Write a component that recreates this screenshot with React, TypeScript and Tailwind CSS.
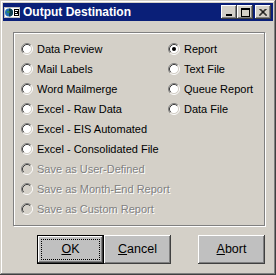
import React from "react";

type Opt = { label: string; checked?: boolean; disabled?: boolean };

const leftOptions: Opt[] = [
  { label: "Data Preview" },
  { label: "Mail Labels" },
  { label: "Word Mailmerge" },
  { label: "Excel - Raw Data" },
  { label: "Excel - EIS Automated" },
  { label: "Excel - Consolidated File" },
  { label: "Save as User-Defined", disabled: true },
  { label: "Save as Month-End Report", disabled: true },
  { label: "Save as Custom Report", disabled: true },
];

const rightOptions: Opt[] = [
  { label: "Report", checked: true },
  { label: "Text File" },
  { label: "Queue Report" },
  { label: "Data File" },
];

function RadioDot({ checked, disabled }: { checked?: boolean; disabled?: boolean }) {
  return (
    <svg width="12" height="12" viewBox="0 0 12 12" className="shrink-0">
      <circle cx="6" cy="6" r="4.5" fill={disabled ? "#d4d0c8" : "#ffffff"} />
      <path d="M2.11 9.89 A5.5 5.5 0 0 1 9.89 2.11" fill="none" stroke="#808080" strokeWidth="1" />
      <path d="M9.89 2.11 A5.5 5.5 0 0 1 2.11 9.89" fill="none" stroke="#ffffff" strokeWidth="1" />
      <path d="M2.82 9.18 A4.5 4.5 0 0 1 9.18 2.82" fill="none" stroke="#404040" strokeWidth="1" />
      <path d="M9.18 2.82 A4.5 4.5 0 0 1 2.82 9.18" fill="none" stroke="#d4d0c8" strokeWidth="1" />
      {checked && <circle cx="6" cy="6" r="2" fill="#000000" />}
    </svg>
  );
}

function Radio({ opt }: { opt: Opt }) {
  return (
    <div className="flex items-center gap-[4px] h-[20px]">
      <RadioDot checked={opt.checked} disabled={opt.disabled} />
      <span
        className={
          opt.disabled
            ? "text-[#808080] [text-shadow:1px_1px_0_#ffffff] whitespace-nowrap"
            : "text-black whitespace-nowrap"
        }
      >
        {opt.label}
      </span>
    </div>
  );
}

function CaptionButton({ children }: { children: React.ReactNode }) {
  return (
    <div className="w-[16px] h-[14px] bg-[#d4d0c8] flex items-center justify-center shadow-[inset_-1px_-1px_#404040,inset_1px_1px_#ffffff,inset_-2px_-2px_#808080]">
      {children}
    </div>
  );
}

function PushButton({
  children,
  isDefault,
  className,
}: {
  children: React.ReactNode;
  isDefault?: boolean;
  className?: string;
}) {
  return (
    <button
      className={
        "w-[67px] h-[29px] bg-[#c0c0c0] text-black text-[12.5px] flex items-center justify-center relative " +
        (isDefault
          ? "border border-black shadow-[inset_-1px_-1px_#404040,inset_1px_1px_#ffffff,inset_-2px_-2px_#808080] "
          : "shadow-[inset_-1px_-1px_#404040,inset_1px_1px_#ffffff,inset_-2px_-2px_#808080] ") +
        (className ?? "")
      }
    >
      {isDefault && (
        <span className="absolute inset-[3px] border border-dotted border-black" />
      )}
      <span className="relative">{children}</span>
    </button>
  );
}

export default function App() {
  return (
    <div className="w-[276px] h-[275px] bg-[#d4d0c8] p-[3px] flex flex-col shadow-[inset_-1px_-1px_#404040,inset_1px_1px_#d4d0c8,inset_-2px_-2px_#808080,inset_2px_2px_#ffffff] font-['Liberation_Sans',Arial,sans-serif] text-[11px]">
      {/* title bar */}
      <div className="h-[18px] bg-[#0a1f78] flex items-center pl-[1px] pr-[2px]">
        <svg width="16" height="14" viewBox="0 0 16 14" className="shrink-0">
          <rect x="0.5" y="2.5" width="15" height="10" fill="#ffffff" stroke="#c0c0c0" />
          <circle cx="5" cy="7.5" r="4" fill="#1f6fb5" />
          <path d="M5 3.5 A4 4 0 0 1 5 11.5 Z" fill="#0f3f4f" />
          <path d="M2.5 6 h3 v2 h-2 z" fill="#2e8b57" />
          <rect x="10" y="4" width="5" height="7" fill="#000000" />
          <rect x="11" y="5" width="3" height="1" fill="#ffffff" />
          <rect x="11" y="7" width="2" height="1" fill="#ffffff" />
          <rect x="11" y="9" width="3" height="1" fill="#ffffff" />
        </svg>
        <span className="ml-[3px] text-white font-bold text-[12px] leading-none">
          Output Destination
        </span>
        <div className="ml-auto flex items-center">
          <CaptionButton>
            <svg width="8" height="8" viewBox="0 0 8 8">
              <rect x="1" y="6" width="6" height="2" fill="#000" />
            </svg>
          </CaptionButton>
          <CaptionButton>
            <svg width="9" height="9" viewBox="0 0 9 9">
              <rect x="0.5" y="0.5" width="8" height="8" fill="none" stroke="#000" />
              <rect x="0" y="1" width="9" height="1" fill="#000" />
            </svg>
          </CaptionButton>
          <div className="ml-[2px]">
            <CaptionButton>
              <svg width="8" height="7" viewBox="0 0 8 7">
                <path d="M0.5 0 L7.5 7 M1.5 0 L8 6.5 M7.5 0 L0.5 7 M6.5 0 L0 6.5" stroke="#000" strokeWidth="1" />
              </svg>
            </CaptionButton>
          </div>
        </div>
      </div>

      {/* group box */}
      <div className="mt-[11px] ml-[10px] mr-[8px] h-[194px] border border-[#808080] shadow-[inset_1px_1px_#ffffff,1px_1px_#ffffff] flex pt-[6px] pl-[7px]">
        <div className="w-[147px] flex flex-col">
          {leftOptions.map((o) => (
            <Radio key={o.label} opt={o} />
          ))}
        </div>
        <div className="flex flex-col">
          {rightOptions.map((o) => (
            <Radio key={o.label} opt={o} />
          ))}
        </div>
      </div>

      {/* buttons */}
      <div className="mt-[9px] ml-[34px] flex">
        <PushButton isDefault>
          <u>O</u>K
        </PushButton>
        <PushButton>
          <u>C</u>ancel
        </PushButton>
        <PushButton className="ml-[27px]">
          <u>A</u>bort
        </PushButton>
      </div>
    </div>
  );
}
